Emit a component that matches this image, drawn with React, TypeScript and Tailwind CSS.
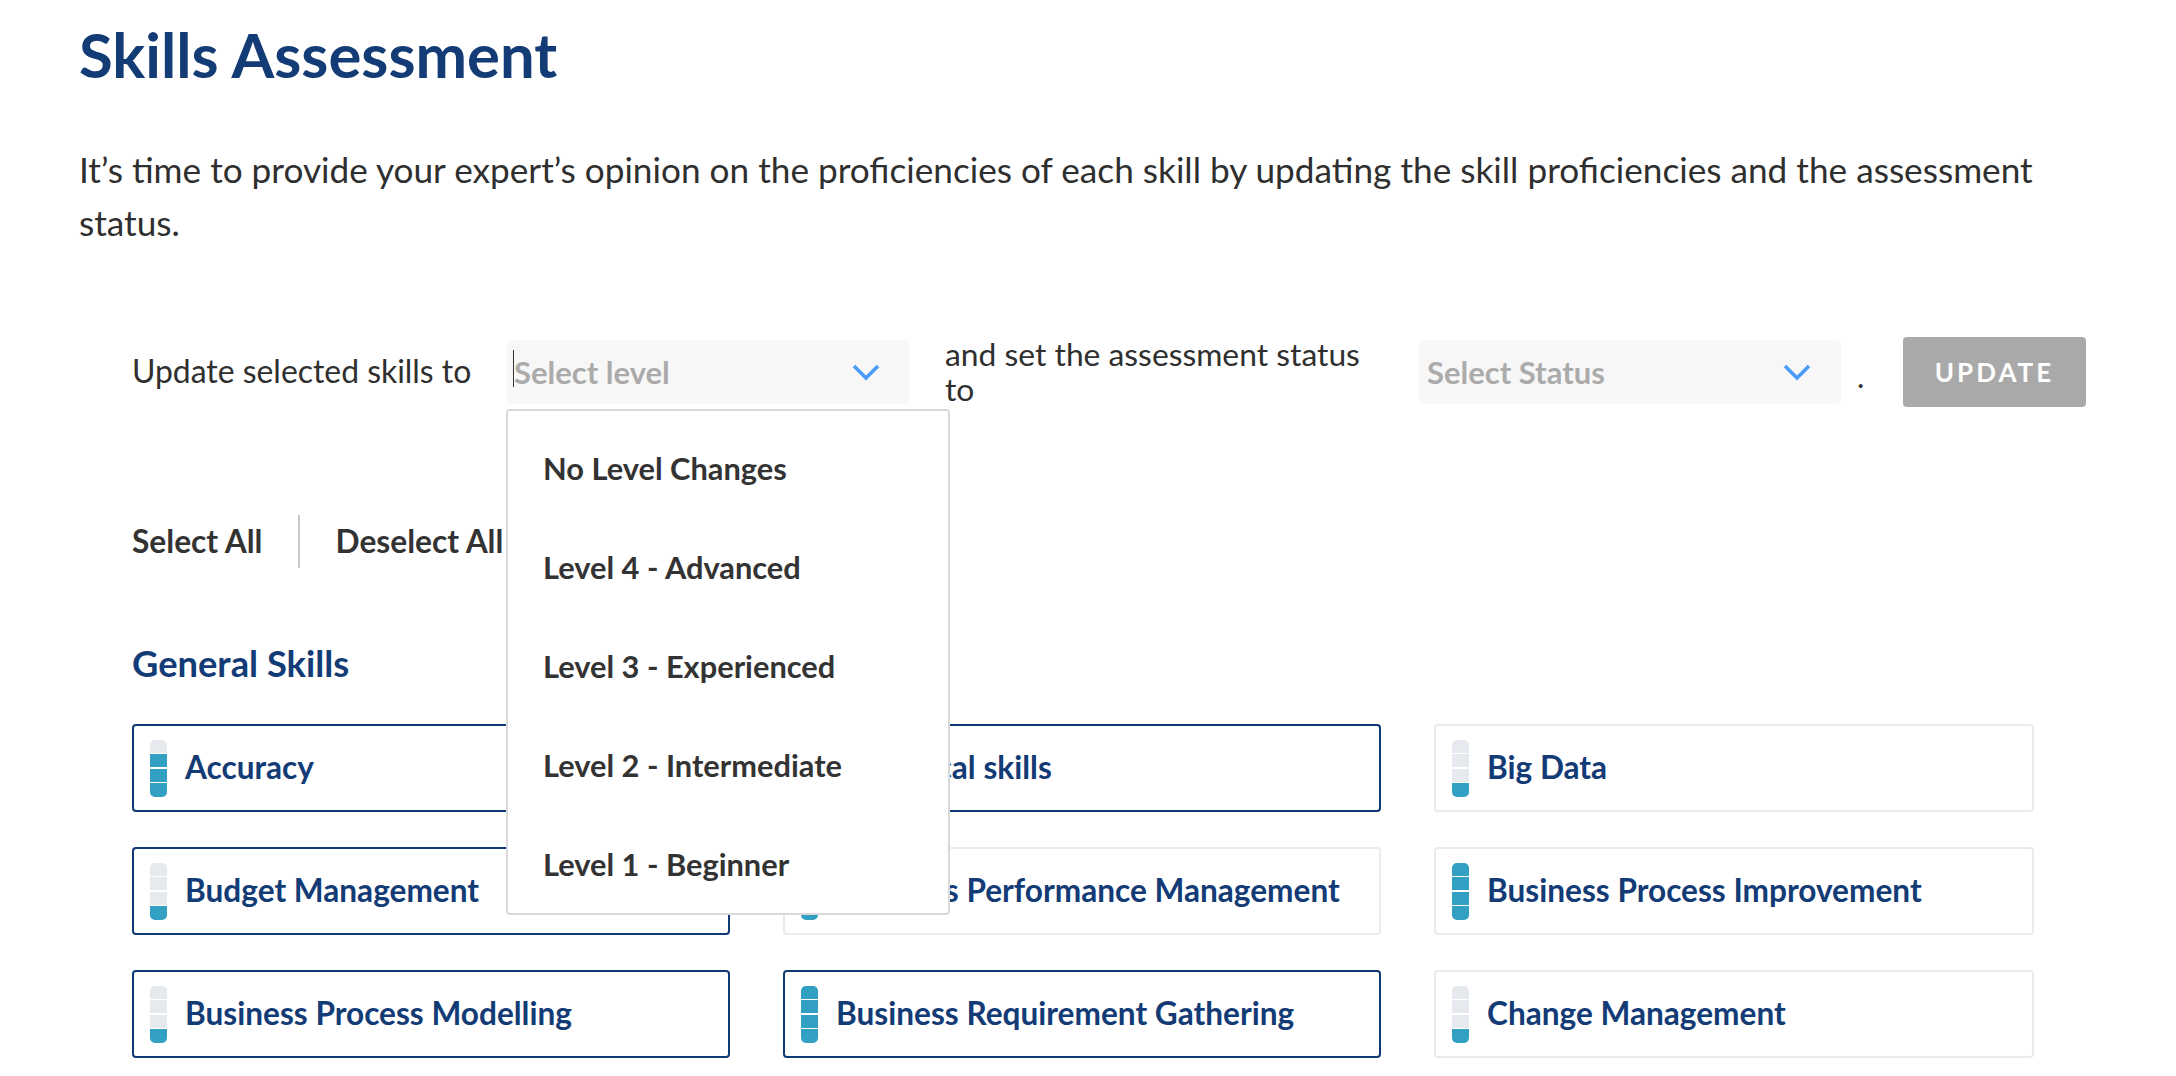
const skills: [string, number, boolean][] = [
  ["Accuracy", 3, true],
  ["Analytical skills", 3, true],
  ["Big Data", 1, false],
  ["Budget Management", 1, true],
  ["Business Performance Management", 1, false],
  ["Business Process Improvement", 4, false],
  ["Business Process Modelling", 1, true],
  ["Business Requirement Gathering", 4, true],
  ["Change Management", 1, false],
];
const options = ["No Level Changes", "Level 4 - Advanced", "Level 3 - Experienced", "Level 2 - Intermediate", "Level 1 - Beginner"];

function Chevron() {
  return (
    <svg width="28" height="17" viewBox="0 0 28 17" fill="none">
      <path d="M2 2L14 14L26 2" stroke="#4a9bfa" strokeWidth="3.6" />
    </svg>
  );
}

function Bar({ level }: { level: number }) {
  return (
    <div className="flex w-[17px] h-[57px] flex-col gap-[1.5px] overflow-hidden rounded-[5px] shrink-0">
      {[4, 3, 2, 1].map((n) => (
        <div key={n} className={n <= level ? "flex-1 bg-[#32a0c2]" : "flex-1 bg-[#e6e9ed]"} />
      ))}
    </div>
  );
}

function Card({ name, level, selected }: { name: string; level: number; selected: boolean }) {
  return (
    <div className={selected
      ? "flex h-[88px] items-center gap-[18px] rounded-[4px] border-2 border-[#0f3a75] pl-[16px]"
      : "flex h-[88px] items-center gap-[18px] rounded-[4px] border-2 border-[#e8ebef] pl-[16px]"}>
      <Bar level={level} />
      <span className="text-[31.6px] font-bold text-[#133b75]">{name}</span>
    </div>
  );
}

export default function App() {
  return (
    <div className="w-[2176px] h-[1076px] overflow-hidden bg-white pl-[79px] font-['Lato',sans-serif] text-[#2f2f2f]">
      <h1 className="pt-[16px] text-[61.6px] leading-[76px] font-bold text-[#133b75]">Skills Assessment</h1>
      <p className="mt-[51px] w-[2010px] text-[35.2px] leading-[53px]">
        It’s time to provide your expert’s opinion on the proficiencies of each skill by updating the skill proficiencies and the assessment status.
      </p>
      <div className="mt-[88px] ml-[53px] w-[1954px]">
        <div className="flex h-[70px] items-center">
          <span className="w-[374px] text-[31.9px]">Update selected skills to</span>
          <div className="relative h-[64px] w-[404px]">
            <div className="flex h-full items-center justify-between rounded-[6px] bg-[#f7f7f7] pl-[8px] pr-[30px]">
              <span className="relative text-[31px] font-bold text-[#ababab]">
                Select level
                <span className="absolute -left-[1px] top-[1px] h-[37px] w-[1px] bg-[#333]" />
              </span>
              <Chevron />
            </div>
            <div className="absolute left-0 top-[69px] z-10 h-[506px] w-[444px] rounded-[4px] border-2 border-[#d9d9d9] bg-white pl-[35px] pt-[9px]">
              {options.map((o) => (
                <div key={o} className="flex h-[99px] items-center text-[30.8px] font-bold text-[#333]">{o}</div>
              ))}
            </div>
          </div>
          <span className="ml-[35px] mr-[33px] w-[441px] text-[31.8px] leading-[35px]">and set the assessment status to</span>
          <div className="flex h-[64px] w-[422px] items-center justify-between rounded-[6px] bg-[#f7f7f7] pl-[8px] pr-[30px]">
            <span className="text-[31px] font-bold text-[#ababab]">Select Status</span>
            <Chevron />
          </div>
          <span className="ml-[16px] w-[46px] self-end pb-[8px] text-[31px]">.</span>
          <button className="h-[70px] w-[183px] rounded-[4px] bg-[#a9a9a9] text-[26px] font-bold tracking-[3px] text-white">UPDATE</button>
        </div>
        <div className="mt-[108px] flex h-[53px] items-center text-[31.7px] font-bold text-[#333]">
          <span>Select All</span>
          <span className="ml-[36px] mr-[35px] h-[53px] w-[2px] bg-[#c8c8c8]" />
          <span>Deselect All</span>
        </div>
        <h2 className="mt-[73px] text-[36.3px] leading-[44px] font-bold text-[#133b75]">General Skills</h2>
        <div className="mt-[39px] grid grid-cols-[598px_598px_600px] gap-x-[53px] gap-y-[35px] w-[1901px]">
          {skills.map(([n, l, s]) => (
            <Card key={n} name={n} level={l} selected={s} />
          ))}
        </div>
      </div>
    </div>
  );
}
